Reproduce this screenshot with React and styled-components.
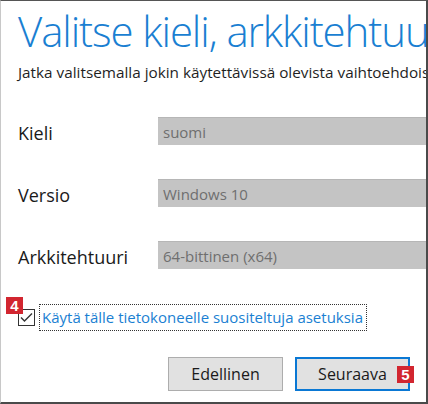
import React from "react"
import styled, { createGlobalStyle } from "styled-components"

const GlobalStyle = createGlobalStyle`
  html, body {
    margin: 0;
    padding: 0;
    background: #ffffff;
  }
  body {
    font-family: "Open Sans", "Noto Sans", "Liberation Sans", sans-serif;
  }
`

const Window = styled.div`
  position: relative;
  box-sizing: border-box;
  width: 428px;
  height: 404px;
  overflow: hidden;
  background: #ffffff;
  border-top: 1px solid #555555;
  border-right: 2px solid #4a4a4a;
  border-bottom: 2px solid #4a4a4a;
  border-left: 1px solid #c8c8c8;
`

const Title = styled.h1`
  margin: 0;
  padding: 5px 0 0 17px;
  font-family: "Open Sans", "Noto Sans", sans-serif;
  font-weight: 300;
  font-size: 42px;
  line-height: 50px;
  letter-spacing: -1.1px;
  color: #1a7fd2;
  white-space: nowrap;
`

const Subtitle = styled.p`
  margin: 0;
  padding: 6px 0 0 17px;
  font-size: 15.3px;
  line-height: 20px;
  color: #1f1f1f;
  white-space: nowrap;
`

const Form = styled.div`
  display: grid;
  grid-template-columns: 140px 300px;
  row-gap: 34px;
  align-items: center;
  padding: 35px 0 0 17px;
`

const Label = styled.span`
  font-size: 18px;
  color: #1a1a1a;
  padding-top: 3px;
`

const Field = styled.div`
  box-sizing: border-box;
  height: 28px;
  padding-left: 5px;
  display: flex;
  align-items: center;
  background: #c4c4c4;
  border-top: 1px solid #b6b6b6;
  font-size: 15px;
  color: #6f6f6f;
`

const CheckRow = styled.div`
  position: relative;
  display: flex;
  align-items: center;
  gap: 4px;
  margin: 35px 0 0 17px;
`

const Box = styled.span`
  box-sizing: border-box;
  width: 17px;
  height: 17px;
  border: 1px solid #333333;
  background: #ffffff;
  display: flex;
  align-items: center;
  justify-content: center;
`

const CheckLabel = styled.span`
  padding: 2px 3px 3px 2px;
  border: 1px dotted #333333;
  font-size: 15px;
  color: #1a7fd2;
  white-space: nowrap;
`

const Buttons = styled.div`
  display: flex;
  justify-content: flex-end;
  gap: 12px;
  padding: 26px 16px 0 0;
`

const Button = styled.button`
  box-sizing: border-box;
  width: 115px;
  height: 34px;
  font-family: "Open Sans", "Noto Sans", sans-serif;
  font-size: 16px;
  color: #1a1a1a;
  background: #e1e1e1;
  border: ${p => (p.$primary ? "2px solid #0a78d4" : "1px solid #adadad")};
  padding: 0;
`

const Badge = styled.span`
  position: absolute;
  width: 17px;
  height: 17px;
  background: #d22630;
  color: #ffffff;
  font-family: "Liberation Sans", Arial, sans-serif;
  font-weight: 700;
  font-size: 15px;
  line-height: 17px;
  text-align: center;
`

const CheckBadge = styled(Badge)`
  left: -12px;
  top: -7px;
`

const NextBadge = styled(Badge)`
  left: 396px;
  top: 365px;
`

export default function App() {
  return (
    <>
      <GlobalStyle />
      <Window>
        <Title>Valitse kieli, arkkitehtuu</Title>
        <Subtitle>Jatka valitsemalla jokin käytettävissä olevista vaihtoehdois</Subtitle>
        <Form>
          <Label>Kieli</Label>
          <Field>suomi</Field>
          <Label>Versio</Label>
          <Field>Windows 10</Field>
          <Label>Arkkitehtuuri</Label>
          <Field>64-bittinen (x64)</Field>
        </Form>
        <CheckRow>
          <CheckBadge>4</CheckBadge>
          <Box>
            <svg width="13" height="11" viewBox="0 0 13 11">
              <path d="M1 5.5 L4.5 9 L12 1.5" fill="none" stroke="#333" strokeWidth="1.4" />
            </svg>
          </Box>
          <CheckLabel>Käytä tälle tietokoneelle suositeltuja asetuksia</CheckLabel>
        </CheckRow>
        <Buttons>
          <Button>Edellinen</Button>
          <Button $primary>Seuraava</Button>
        </Buttons>
        <NextBadge>5</NextBadge>
      </Window>
    </>
  )
}
